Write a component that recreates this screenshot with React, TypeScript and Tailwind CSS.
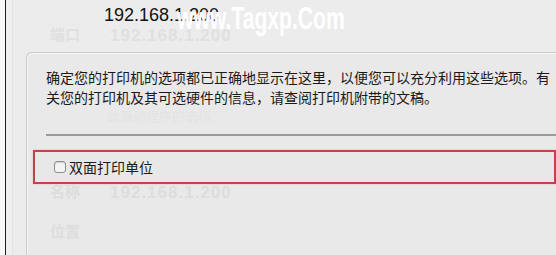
import React from 'react';

export default function App() {
  return (
    <div className="relative flex h-[255px] w-[556px] overflow-hidden bg-[#ececec] font-['Noto_Sans_CJK_SC','Liberation_Sans',sans-serif]">
      {/* outer window edge */}
      <div className="w-[5px] bg-[#f7f7f7]" />
      <div className="w-px bg-[#1e1e1e]" />
      <div className="w-[6px] bg-[#eeeeee]" />
      <div className="w-px bg-[#e2e2e2]" />

      <div className="flex flex-1 flex-col">
        {/* top address */}
        <div className="h-[52px] pl-[91px] pt-[2px]">
          <span className="font-['Liberation_Sans',sans-serif] text-[18px] leading-[22px] text-[#111]">
            192.168.1.200
          </span>
        </div>

        {/* options panel */}
        <div className="ml-[13px] flex flex-1 flex-col rounded-tl-[6px] border-l border-t border-[#c9c9c9] bg-[#e9e9e9] shadow-[inset_1px_1px_0_#f6f6f6]">
          <p className="whitespace-nowrap pl-[19px] pt-[14px] text-[14px] leading-[20px] text-[#1a1a1a]">
            确定您的打印机的选项都已正确地显示在这里，以便您可以充分利用这些选项。有
            <br />
            关您的打印机及其可选硬件的信息，请查阅打印机附带的文稿。
          </p>
          <div className="ml-[19px] mt-[27px] h-[2px] bg-[#9a9a9a]" />
          <div className="ml-[6px] mt-[14px] flex h-[34px] items-center border-2 border-[#c4424c] bg-[#e8e8e8] pl-[19px] shadow-[0_0_2px_#f0b7bb]">
            <span className="h-[12px] w-[12px] rounded-[3px] border border-[#8d8d8d] bg-[#f4f4f4] shadow-[inset_0_1px_1px_#cfcfcf]" />
            <span className="ml-[3px] text-[14px] leading-[18px] text-[#1a1a1a]">双面打印单位</span>
          </div>
        </div>
      </div>

      {/* faded ghost text from underlying dialog */}
      <div className="pointer-events-none absolute left-[50px] top-[23px] flex gap-[30px] text-[15px] font-bold text-[#e0e0e0]">
        <span>端口</span>
        <span className="font-['Liberation_Sans',sans-serif] text-[17px] tracking-[1px]">192.168.1.200</span>
      </div>
      <div className="pointer-events-none absolute left-[107px] top-[106px] text-[13px] text-[#e3e3e3]">
        此驱动程序的选项：
      </div>
      <div className="pointer-events-none absolute left-[50px] top-[180px] flex gap-[30px] text-[15px] font-bold text-[#dddddd]">
        <span>名称</span>
        <span className="font-['Liberation_Sans',sans-serif] text-[17px] tracking-[1px]">192.168.1.200</span>
      </div>
      <div className="pointer-events-none absolute left-[50px] top-[220px] text-[15px] font-bold text-[#dddddd]">
        位置
      </div>

      {/* watermark */}
      <div className="pointer-events-none absolute left-[177px] top-[-1px] origin-left scale-x-[0.66] font-['Liberation_Sans_Narrow','Liberation_Sans',sans-serif] text-[32px] font-bold leading-[38px] text-white">
        www.Tagxp.Com
      </div>
    </div>
  );
}
